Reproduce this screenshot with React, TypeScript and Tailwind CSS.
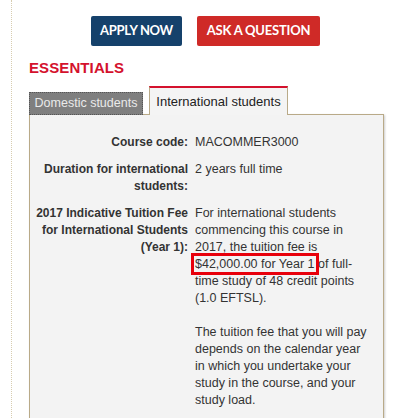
import React from 'react';

const rows = [
    { label: 'Course code:', value: ['MACOMMER3000'] },
    { label: 'Duration for international students:', value: ['2 years full time'] },
];

const App = () => {
    return (
        <div className="w-[405px] h-[418px] overflow-hidden bg-white relative font-['Liberation_Sans',Arial,sans-serif] text-[13px] text-[#333]">
            {/* dotted rule on the left */}
            <div className="absolute left-[11px] top-0 h-full border-l border-dotted border-[#d8cdb0]" />

            <div className="pl-[29px] pt-[16px]">
                {/* Buttons */}
                <div className="flex gap-[15px] ml-[62px]">
                    <button className="h-[30px] w-[91px] bg-[#15416b] text-white rounded-[2px] font-['Lato',sans-serif] font-bold text-[13px] tracking-[-0.3px]">
                        APPLY NOW
                    </button>
                    <button className="h-[30px] w-[123px] bg-[#cf2a27] text-white rounded-[2px] font-['Lato',sans-serif] font-bold text-[13px] tracking-[-0.2px]">
                        ASK A QUESTION
                    </button>
                </div>

                <h2 className="mt-[13px] text-[15px] leading-[18px] font-bold tracking-[0.1px] text-[#d4112d]">ESSENTIALS</h2>

                {/* Tabs */}
                <div className="flex items-end gap-[6px] mt-[9px] relative z-10">
                    <div className="h-[23px] w-[114px] bg-[#7f7f7f] border border-dotted border-[#555] text-[#eaeaea] text-[12.5px] flex items-center justify-center mb-[-1px]">
                        Domestic students
                    </div>
                    <div className="h-[29px] w-[139px] bg-[#f4f4f4] border-x border-[#b9aa88] border-t-2 border-t-[#d4112d] text-[#222] flex items-center justify-center mb-[-1px]">
                        International students
                    </div>
                </div>

                {/* Panel */}
                <div className="w-[355px] h-[320px] bg-[#f3f3f3] border border-[#b9aa88] shadow-[1px_1px_2px_rgba(0,0,0,0.2)] pt-[19px] pl-[5px]">
                    <div className="grid grid-cols-[153px_172px] gap-x-[7px] gap-y-[10px] leading-[17px]">
                        {rows.map((r) => (
                            <React.Fragment key={r.label}>
                                <div className="text-right font-bold text-[12px]">{r.label}</div>
                                <div className="text-[12.5px]">{r.value}</div>
                            </React.Fragment>
                        ))}
                        <div className="text-right font-bold text-[12px]">2017 Indicative Tuition Fee for International Students (Year 1):</div>
                        <div className="text-[12.5px]">
                            <p>
                                For international students commencing this course in 2017, the tuition fee is{' '}
                                <span className="outline-[3px] outline outline-[#e8000b] outline-offset-[1px]">$42,000.00 for Year 1</span>{' '}
                                of full-time study of 48 credit points (1.0 EFTSL).
                            </p>
                            <p className="mt-[17px]">
                                The tuition fee that you will pay depends on the calendar year in which you undertake your study in the course, and your study load.
                            </p>
                        </div>
                    </div>
                </div>
            </div>
        </div>
    );
};

export default App;
